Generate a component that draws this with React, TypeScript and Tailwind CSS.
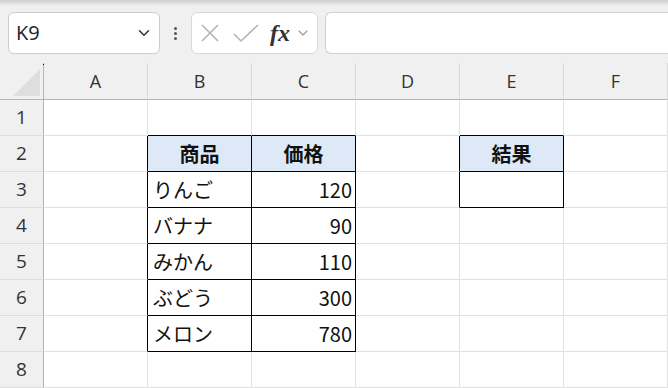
import { ChevronDown } from "lucide-react";

type Cell = {
  text?: string;
  head?: boolean;
  num?: boolean;
  fill?: boolean;
  bR?: boolean;
  bB?: boolean;
};

const cols = ["A", "B", "C", "D", "E", "F"];

// row index 1..8, col index 0..5
const cellMap: Record<string, Cell> = {
  "1-1": { bB: true },
  "1-2": { bB: true },
  "1-4": { bB: true },
  "2-0": { bR: true },
  "2-1": { text: "商品", head: true, fill: true, bR: true, bB: true },
  "2-2": { text: "価格", head: true, fill: true, bR: true, bB: true },
  "2-3": { bR: true },
  "2-4": { text: "結果", head: true, fill: true, bR: true, bB: true },
  "3-0": { bR: true },
  "3-1": { text: "りんご", bR: true, bB: true },
  "3-2": { text: "120", num: true, bR: true, bB: true },
  "3-3": { bR: true },
  "3-4": { bR: true, bB: true },
  "4-0": { bR: true },
  "4-1": { text: "バナナ", bR: true, bB: true },
  "4-2": { text: "90", num: true, bR: true, bB: true },
  "5-0": { bR: true },
  "5-1": { text: "みかん", bR: true, bB: true },
  "5-2": { text: "110", num: true, bR: true, bB: true },
  "6-0": { bR: true },
  "6-1": { text: "ぶどう", bR: true, bB: true },
  "6-2": { text: "300", num: true, bR: true, bB: true },
  "7-0": { bR: true },
  "7-1": { text: "メロン", bR: true, bB: true },
  "7-2": { text: "780", num: true, bR: true, bB: true },
};

function SheetCell({ row, col }: { row: number; col: number }) {
  const c = cellMap[`${row}-${col}`] ?? {};
  return (
    <div
      className={`h-[36px] border-r border-b flex items-center text-[20px] text-[#111] ${
        c.bR ? "border-r-black" : "border-r-[#e1e1e1]"
      } ${c.bB ? "border-b-black" : "border-b-[#e1e1e1]"} ${
        c.fill ? "bg-[#dde9f7]" : "bg-white"
      } ${c.head ? "justify-center font-bold" : c.num ? "justify-end pr-[3px]" : "pl-[5px]"}`}
    >
      {c.text}
    </div>
  );
}

export default function App() {
  return (
    <div
      className="w-[668px] h-[388px] overflow-hidden bg-[#f0f0f0] relative"
      style={{ fontFamily: '"Noto Sans CJK JP", "Noto Sans", sans-serif' }}
    >
      <div className="absolute top-0 left-0 right-0 h-[6px] bg-gradient-to-b from-[#cfcfcf] to-[#f0f0f0]" />

      {/* formula bar */}
      <div className="h-[63px] pt-[12px] flex items-start">
        <div className="ml-[8px] w-[152px] h-[42px] bg-white border border-[#cdcdcd] rounded-[6px] flex items-center pl-[7px] pr-[6px]">
          <span className="flex-1 text-[20px] text-[#222]" style={{ fontFamily: '"Open Sans", "Noto Sans", sans-serif' }}>
            K9
          </span>
          <ChevronDown size={18} strokeWidth={2} className="text-[#333]" />
        </div>
        <div className="w-[31px] h-[42px] flex flex-col items-center justify-center gap-[2px]">
          <span className="w-[3px] h-[3px] bg-[#555] rounded-full" />
          <span className="w-[3px] h-[3px] bg-[#555] rounded-full" />
          <span className="w-[3px] h-[3px] bg-[#555] rounded-full" />
        </div>
        <div className="w-[127px] h-[42px] bg-white border border-[#d8d8d8] rounded-[6px] flex items-center pl-[8px]">
          <svg width="20" height="20" viewBox="0 0 20 20" className="mr-[13px]">
            <path d="M2 2L18 18M18 2L2 18" stroke="#b3b3b3" strokeWidth="1.6" fill="none" />
          </svg>
          <svg width="26" height="20" viewBox="0 0 26 20" className="mr-[11px]">
            <path d="M1 11L8 18L25 2" stroke="#b3b3b3" strokeWidth="1.6" fill="none" />
          </svg>
          <span
            className="text-[24px] italic font-bold text-[#333] leading-none mr-[5px]"
            style={{ fontFamily: '"Liberation Serif", "DejaVu Serif", serif' }}
          >
            fx
          </span>
          <ChevronDown size={16} strokeWidth={1.6} className="text-[#999]" />
        </div>
        <div className="ml-[7px] flex-1 h-[42px] bg-white border border-[#d0d0d0] border-r-0 rounded-l-[6px]" />
      </div>

      {/* sheet */}
      <div className="grid grid-cols-[44px_repeat(6,104px)]">
        <div className="h-[37px] border-r border-b border-[#b4b4b4] relative">
          <div className="absolute left-[13px] top-[6px] w-[27px] h-[27px] bg-[#dedede] [clip-path:polygon(100%_0,100%_100%,0_100%)]" />
          <div className="absolute left-[43px] top-[1px] w-[1px] h-[1px] bg-black" />
        </div>
        {cols.map((c) => (
          <div
            key={c}
            className="h-[37px] border-r border-r-[#d9d9d9] border-b border-b-[#b4b4b4] flex items-center justify-center text-[18px] text-[#333]"
            style={{ fontFamily: '"Open Sans", "Noto Sans", sans-serif' }}
          >
            {c}
          </div>
        ))}
        {[1, 2, 3, 4, 5, 6, 7, 8].map((r) => (
          <div key={r} className="contents">
            <div
              className="h-[36px] border-r border-r-[#b4b4b4] border-b border-b-[#dcdcdc] flex items-center justify-center text-[19px] text-[#333]"
              style={{ fontFamily: '"Open Sans", "Noto Sans", sans-serif' }}
            >
              {r}
            </div>
            {cols.map((_, ci) => (
              <SheetCell key={ci} row={r} col={ci} />
            ))}
          </div>
        ))}
      </div>
    </div>
  );
}
